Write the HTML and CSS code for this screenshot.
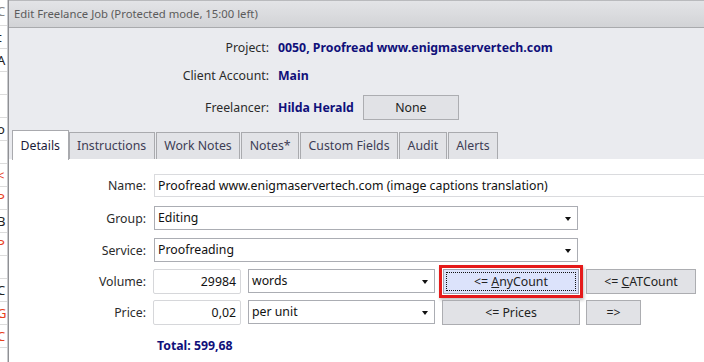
FILE: index.html
```html
<!DOCTYPE html>
<html lang="en">
<head>
  <meta charset="UTF-8" />
  <title>Edit Freelance Job</title>
  <link rel="stylesheet" href="styles.css">
</head>
<body>
  <div class="backdrop">
    <div class="cell gray">C</div>
    <div class="cell">t</div>
    <div class="cell">A</div>
    <div class="cell"></div>
    <div class="cell"></div>
    <div class="cell">o</div>
    <div class="cell orange">.</div>
    <div class="cell red">&lt;</div>
    <div class="cell red">P</div>
    <div class="cell">B</div>
    <div class="cell red">P</div>
    <div class="cell orange">.</div>
    <div class="cell">C</div>
    <div class="cell red">G</div>
    <div class="cell red">C</div>
  </div>

  <div class="window">
    <div class="titlebar">Edit Freelance Job (Protected mode, 15:00 left)</div>

    <div class="header">
      <div class="hrow">
        <span class="hlabel">Project:</span>
        <span class="hvalue">0050, Proofread www.enigmaservertech.com</span>
      </div>
      <div class="hrow">
        <span class="hlabel">Client Account:</span>
        <span class="hvalue">Main</span>
      </div>
      <div class="hrow tall">
        <span class="hlabel">Freelancer:</span>
        <span class="hvalue">Hilda Herald</span>
        <button class="btn none-btn">None</button>
      </div>
    </div>

    <div class="tabs">
      <div class="tab active">Details</div>
      <div class="tab">Instructions</div>
      <div class="tab">Work Notes</div>
      <div class="tab">Notes*</div>
      <div class="tab">Custom Fields</div>
      <div class="tab">Audit</div>
      <div class="tab">Alerts</div>
    </div>

    <div class="panel">
      <div class="frow name-row">
        <label class="flabel">Name:</label>
        <div class="field name-field">Proofread www.enigmaservertech.com (image captions translation)</div>
      </div>
      <div class="frow group-row">
        <label class="flabel">Group:</label>
        <div class="select wide">Editing<span class="arrow"></span></div>
      </div>
      <div class="frow">
        <label class="flabel">Service:</label>
        <div class="select wide">Proofreading<span class="arrow"></span></div>
      </div>
      <div class="frow">
        <label class="flabel">Volume:</label>
        <div class="field num">29984</div>
        <div class="select unit">words<span class="arrow"></span></div>
        <div class="highlight">
          <button class="btn focused"><span class="focus-rect">&lt;= <u>A</u>nyCount</span></button>
        </div>
        <button class="btn cat-btn">&lt;= <u>C</u>ATCount</button>
      </div>
      <div class="frow">
        <label class="flabel">Price:</label>
        <div class="field num">0,02</div>
        <div class="select unit">per unit<span class="arrow"></span></div>
        <button class="btn prices-btn">&lt;= Prices</button>
        <button class="btn arrow-btn">=&gt;</button>
      </div>
      <div class="total">Total: 599,68</div>
    </div>
  </div>
</body>
</html>
```

FILE: styles.css
```css
body {
  margin: 0;
  height: 362px;
  display: flex;
  overflow: hidden;
  font-family: "Noto Sans", sans-serif;
  font-size: 12.3px;
  color: #2b2b2b;
  background: #fff;
}

/* app behind the dialog */
.backdrop {
  width: 7px;
  flex-shrink: 0;
  overflow: hidden;
  background: #fff;
  border-right: 1px solid #c9cacd;
}
.cell {
  height: 22px;
  line-height: 22px;
  border-bottom: 1px solid #dcdcdc;
  font-size: 13px;
  color: #222;
  text-indent: -3px;
  white-space: nowrap;
}
.cell.gray { color: #888; height: 25px; }
.cell.red { color: #e8401c; }
.cell.orange { color: #f0a020; }

/* dialog */
.window {
  flex: 1;
  display: flex;
  flex-direction: column;
  background: #eaebef;
  border-left: 1px solid #8f9094;
  overflow: hidden;
}
.titlebar {
  height: 26px;
  line-height: 25px;
  padding-left: 5px;
  font-size: 11.3px;
  border-top: 1px solid #b9babd;
  border-bottom: 1px solid #a9aaad;
  background: linear-gradient(#e3e4e7, #d2d3d6);
  color: #5b5b5b;
}

.header {
  padding-top: 5px;
  height: 96px;
}
.hrow {
  display: flex;
  align-items: center;
  height: 28px;
}
.hrow.tall {
  height: 36px;
}
.hlabel {
  width: 260px;
  text-align: right;
  margin-right: 9px;
}
.hvalue {
  color: #10107a;
  font-weight: bold;
}

.btn {
  font-family: inherit;
  font-size: 12.3px;
  color: #222;
  height: 25px;
  padding: 0;
  background: #e1e2e6;
  border: 1px solid #acadb1;
  border-radius: 0;
}
.none-btn {
  width: 96px;
  height: 25px;
  margin-left: 9px;
}

/* tabs */
.tabs {
  display: flex;
  align-items: flex-end;
  height: 30px;
  padding-left: 3px;
}
.tab {
  height: 26px;
  line-height: 25px;
  padding: 0 7.5px;
  margin-right: 1px;
  background: #e2e3e7;
  border: 1px solid #a9aaae;
  border-bottom: none;
  color: #3d3d55;
}
.tab.active {
  height: 29px;
  line-height: 30px;
  margin-right: 0;
  background: #fff;
  color: #1b1b3a;
  position: relative;
  top: 1px;
}

/* details panel */
.panel {
  flex: 1;
  background: #fff;
  padding-top: 14px;
  display: flex;
  flex-direction: column;
  gap: 7px;
  overflow: hidden;
}
.frow {
  display: flex;
  align-items: center;
  height: 24px;
}
.name-row {
  margin-bottom: 2px;
}
.group-row {
  margin-bottom: 1px;
}
.flabel {
  width: 137px;
  text-align: right;
  margin-right: 7px;
  flex-shrink: 0;
}
.field {
  height: 23px;
  line-height: 22px;
  box-sizing: border-box;
  border: 1px solid #dadbde;
  padding: 0 3px;
  white-space: nowrap;
  color: #111;
}
.name-field {
  width: 580px;
  flex-shrink: 0;
  margin-left: 1px;
}
.num {
  width: 88px;
  height: 25px;
  line-height: 23px;
  text-align: right;
  padding-right: 4px;
  border-color: #d6d7da;
  border-radius: 2px;
}
.select {
  position: relative;
  height: 24px;
  line-height: 22px;
  box-sizing: border-box;
  border: 1px solid #abadb3;
  padding: 0 3px;
  color: #111;
  flex-shrink: 0;
}
.select.wide {
  width: 424px;
  margin-left: 1px;
}
.select.unit {
  width: 187px;
  margin-left: 7px;
}
.arrow {
  position: absolute;
  right: 6px;
  top: 10px;
  border-left: 3px solid transparent;
  border-right: 3px solid transparent;
  border-top: 4px solid #111;
}

.highlight {
  margin-left: 4px;
  padding: 1px;
  border: 3px solid #e51a1a;
  box-shadow: 1px 2px 3px rgba(0, 0, 0, 0.25);
  display: flex;
}
.btn.focused {
  width: 136px;
  background: #dce3fb;
  border-color: #9ea3b3;
  padding: 2px;
}
.focus-rect {
  display: block;
  height: 19px;
  line-height: 18px;
  box-sizing: border-box;
  border: 1px dotted #111;
}
.cat-btn {
  width: 110px;
  margin-left: 3px;
}
.prices-btn {
  width: 138px;
  margin-left: 7px;
}
.arrow-btn {
  width: 55px;
  margin-left: 6px;
}

.total {
  margin-top: 6px;
  padding-left: 148px;
  color: #10107a;
  font-weight: bold;
}
```
